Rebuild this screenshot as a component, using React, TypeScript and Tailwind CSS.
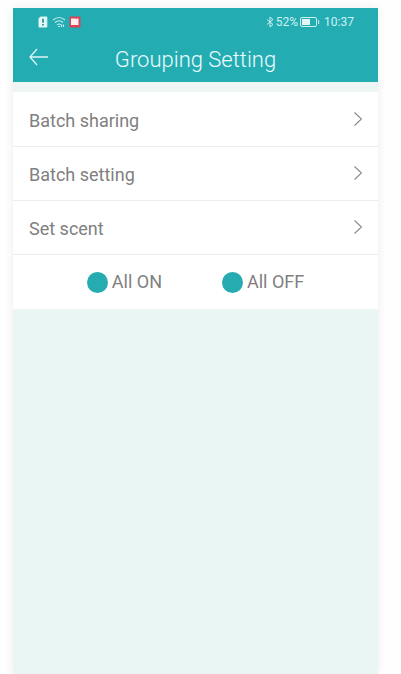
const menuItems = ['Batch sharing', 'Batch setting', 'Set scent']
const switchActions = ['All ON', 'All OFF']

function StatusBar() {
  return (
    <div className="flex h-7 items-center justify-between px-6">
      <div className="flex items-center gap-1">
        <svg className="h-3 w-3" viewBox="0 0 12 12" aria-hidden="true">
          <path d="M3.5 1h6.3v10H2V2.5z" fill="#e2f7f7" stroke="#e2f7f7" strokeLinejoin="round" />
          <path d="M6 2.8v4M6 8v1.5" stroke="#168a8f" strokeWidth="1.6" />
        </svg>
        <svg className="h-3 w-3 overflow-visible" viewBox="0 0 12 12" fill="none" stroke="#c5ecee" strokeWidth="1.1" aria-hidden="true">
          <path d="M0 4Q6-1 12 4M2 6.5Q6 3 10 6.5M4 8.7Q6 7.2 8 8.7" />
          <path d="M5 10.5h2M8.5 8.5v2.5M10.5 8.5v2.5" />
        </svg>
        <svg className="h-3 w-3" viewBox="0 0 12 12" aria-hidden="true">
          <rect x="0.5" y="0.5" width="11" height="11" rx="1" fill="#dc4354" />
          <path d="M2 2.5h5v1l1-1h1.5v6.5H2z" fill="#fff0f1" />
        </svg>
      </div>
      <div className="flex items-center text-xs text-[#d0f0f1]">
        <svg className="h-3 w-2" viewBox="0 0 8 12" fill="none" stroke="currentColor" aria-hidden="true">
          <path d="M1 3.5l6 5L4 11V1l3 2.5-6 5" />
        </svg>
        <span className="ml-0.5">52%</span>
        <svg className="ml-0.5 h-3 w-5" viewBox="0 0 20 12" fill="none" aria-hidden="true">
          <rect x="0.5" y="1.5" width="16" height="9" rx="1.5" stroke="currentColor" />
          <path d="M2 3h8v6H2z" fill="#e2f7f7" />
          <path d="M18.7 4v4" stroke="currentColor" />
        </svg>
        <span className="ml-1">10:37</span>
      </div>
    </div>
  )
}

function Header() {
  return (
    <header className="bg-[#23adb3]">
      <StatusBar />
      <div className="grid h-[46px] grid-cols-[48px_1fr_48px] items-center pb-1">
        <button type="button" aria-label="Back" className="flex h-10 items-center pl-4">
          <svg className="h-5 w-5" viewBox="0 0 20 20" fill="none" stroke="#def6f7" strokeWidth="1.3" aria-hidden="true">
            <path d="M19 10H1M8 2L1 10l7 8" />
          </svg>
        </button>
        <h1 className="pt-1 text-center text-[22px] font-light text-[#ecfbfc]">Grouping Setting</h1>
      </div>
    </header>
  )
}

export default function App() {
  return (
    <div className="min-h-screen bg-[#fefefe] pt-2 pr-[23px] pl-[13px] font-['Roboto',sans-serif]">
      <main className="flex min-h-[calc(100vh-8px)] flex-col bg-[#e9f6f3] shadow-[0_0_10px_rgba(0,0,0,0.07)]">
        <Header />
        <div className="bg-[#eef6f5] pt-[10px]">
          <section className="bg-white text-lg text-[#808080]">
            <ul className="pt-px">
              {menuItems.map((item) => (
                <li key={item} className="border-b border-[#ececec]">
                  <button type="button" className="flex h-[53px] w-full items-center justify-between px-4 pt-0.5 text-left">
                    {item}
                    <svg className="mb-1 h-4 w-2" viewBox="0 0 8 16" fill="none" stroke="#888888" strokeWidth="1.1" aria-hidden="true">
                      <path d="M0.5 1.5L7.5 8l-7 6.5" />
                    </svg>
                  </button>
                </li>
              ))}
            </ul>
            <div className="flex h-[54px] items-center justify-center gap-[60px]">
              {switchActions.map((action) => (
                <button key={action} type="button" className="flex items-center gap-1">
                  <span className="h-[21px] w-[21px] rounded-full bg-[#26abb1]" />
                  {action}
                </button>
              ))}
            </div>
          </section>
        </div>
      </main>
    </div>
  )
}
